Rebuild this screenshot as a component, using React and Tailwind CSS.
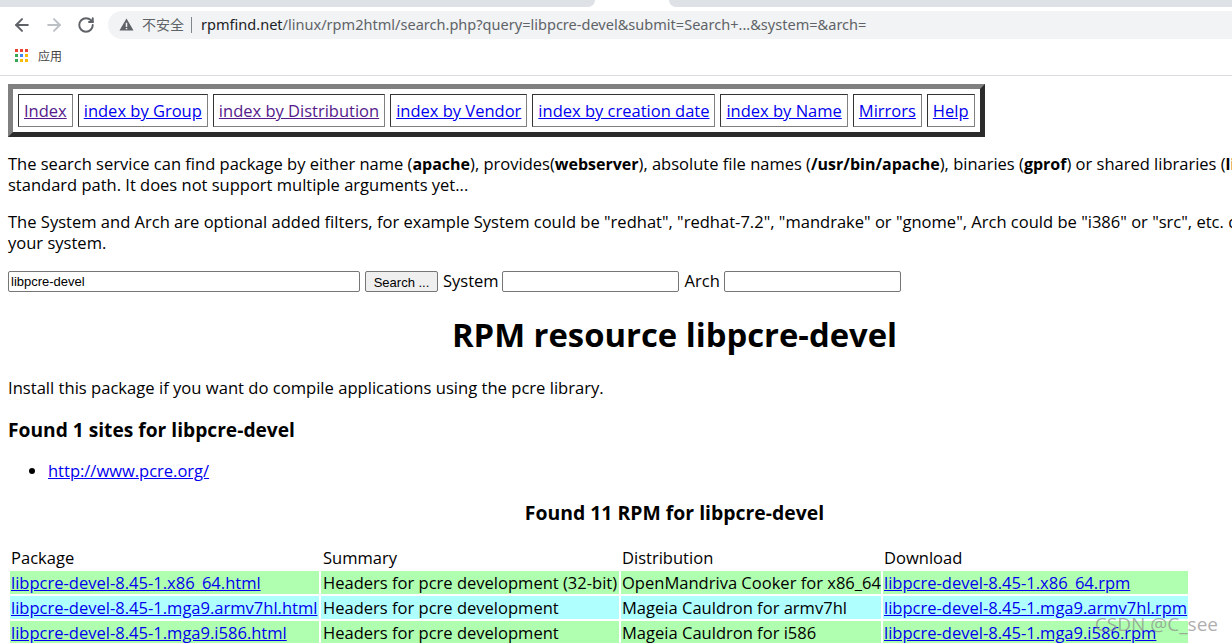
import React from "react";
import { ArrowLeft, ArrowRight, RotateCw } from "lucide-react";

const NAV = [
  { label: "Index", visited: true },
  { label: "index by Group" },
  { label: "index by Distribution", visited: true },
  { label: "index by Vendor" },
  { label: "index by creation date" },
  { label: "index by Name" },
  { label: "Mirrors" },
  { label: "Help" },
];

const ROWS = [
  {
    pkg: "libpcre-devel-8.45-1.x86_64.html",
    summary: "Headers for pcre development (32-bit)",
    dist: "OpenMandriva Cooker for x86_64",
    rpm: "libpcre-devel-8.45-1.x86_64.rpm",
    bg: "bg-[#b0ffb0]",
  },
  {
    pkg: "libpcre-devel-8.45-1.mga9.armv7hl.html",
    summary: "Headers for pcre development",
    dist: "Mageia Cauldron for armv7hl",
    rpm: "libpcre-devel-8.45-1.mga9.armv7hl.rpm",
    bg: "bg-[#b0ffff]",
  },
  {
    pkg: "libpcre-devel-8.45-1.mga9.i586.html",
    summary: "Headers for pcre development",
    dist: "Mageia Cauldron for i586",
    rpm: "libpcre-devel-8.45-1.mga9.i586.rpm",
    bg: "bg-[#b0ffb0]",
  },
];

const APPS = ["#ea4335", "#ea4335", "#ea4335", "#34a853", "#4285f4", "#fbbc05", "#34a853", "#fbbc05", "#fbbc05"];

function BrowserBar() {
  return (
    <div className="h-[76px] border-b border-[#dadce0] font-['Noto_Sans','Noto_Sans_CJK_SC',sans-serif]">
      {/* tab strip */}
      <div className="flex h-[7px]">
        <div className="w-[595px] bg-[#dee1e6] rounded-br-lg" />
        <div className="w-[74px] bg-white" />
        <div className="flex-1 bg-[#dee1e6] rounded-bl-lg" />
      </div>
      {/* toolbar */}
      <div className="flex items-center h-[28px] mt-[4px]">
        <div className="flex items-center w-[108px] pl-[12px] gap-[12px]">
          <ArrowLeft className="w-[20px] h-[20px] text-[#5f6368]" strokeWidth={2.4} />
          <ArrowRight className="w-[20px] h-[20px] text-[#bdc1c6]" strokeWidth={2.4} />
          <RotateCw className="w-[18px] h-[18px] ml-px text-[#5f6368]" strokeWidth={2.6} />
        </div>
        <div className="flex-1 h-full bg-[#f1f3f4] rounded-l-full flex items-center pl-[11px] pb-[1px] text-[14.55px] text-[#5f6368]">
          <svg viewBox="0 0 16 16" className="w-[15px] h-[15px] fill-[#5f6368]">
            <path d="M8 1.5 15.5 14.5H.5ZM7.2 6v4.6h1.6V6Zm0 5.6v1.5h1.6v-1.5Z" fillRule="evenodd" />
          </svg>
          <span className="ml-[8px] text-[14px]">不安全</span>
          <span className="w-px h-[16px] bg-[#80868b] ml-[7px] mr-[9px]" />
          <span className="text-[#202124]">rpmfind.net</span>
          <span>/linux/rpm2html/search.php?query=libpcre-devel&amp;submit=Search+...&amp;system=&amp;arch=</span>
        </div>
      </div>
      {/* bookmarks */}
      <div className="flex items-center h-[33px] pl-[15px] gap-[10px]">
        <div className="grid grid-cols-3 gap-[2px] w-[13px]">
          {APPS.map((c, i) => (
            <span key={i} className="w-[3px] h-[3px]" style={{ background: c }} />
          ))}
        </div>
        <span className="mt-[2px] text-[12px] text-[#444]">应用</span>
      </div>
    </div>
  );
}

function NavTable() {
  return (
    <div className="inline-flex gap-[5px] p-[5px] border-[5px] border-t-[#808080] border-l-[#808080] border-b-[#2b2b2b] border-r-[#2b2b2b] bg-white">
      {NAV.map((n) => (
        <div
          key={n.label}
          className="h-[33px] flex items-center px-[5px] border border-t-[#333] border-l-[#333] border-b-[#808080] border-r-[#808080]"
        >
          <a href="#" className={`underline ${n.visited ? "text-[#551a8b]" : "text-[#0000ee]"}`}>
            {n.label}
          </a>
        </div>
      ))}
    </div>
  );
}

function SearchForm() {
  return (
    <div className="flex items-center h-[21px] mt-[18px] whitespace-nowrap">
      <input
        readOnly
        value="libpcre-devel"
        className="w-[352px] h-[21px] px-[2px] border border-[#767676] rounded-[2px] text-[13px] text-black font-['Liberation_Sans',sans-serif] outline-none"
      />
      <button className="w-[73px] h-[21px] ml-[5px] border border-[#767676] rounded-[2px] bg-[#efefef] text-[13px] text-black font-['Liberation_Sans',sans-serif]">
        Search ...
      </button>
      <span className="ml-[5px] -mt-[2px]">System</span>
      <input readOnly className="w-[177px] h-[21px] ml-[3px] border border-[#767676] rounded-[2px] outline-none" />
      <span className="ml-[6px] -mt-[2px]">Arch</span>
      <input readOnly className="w-[177px] h-[21px] ml-[4px] border border-[#767676] rounded-[2px] outline-none" />
    </div>
  );
}

function ResultTable() {
  return (
    <div className="mt-[22px] ml-[2px] w-[1178px] text-[16.55px]">
      <div className="grid grid-cols-[309px_298px_260px_305px] gap-x-[2px] h-[22px] leading-[22px] px-[1px]">
        <span>Package</span>
        <span className="pl-[1px]">Summary</span>
        <span>Distribution</span>
        <span>Download</span>
      </div>
      <div className="flex flex-col gap-[2px] mt-[2px]">
        {ROWS.map((r) => (
          <div key={r.pkg} className="grid grid-cols-[309px_298px_260px_305px] gap-x-[2px] h-[23px] leading-[23px] whitespace-nowrap">
            <a href="#" className={`${r.bg} text-[#0000ee] underline px-[1px]`}>{r.pkg}</a>
            <span className={`${r.bg} pl-[2px]`}>{r.summary}</span>
            <span className={`${r.bg} px-[1px]`}>{r.dist}</span>
            <a href="#" className={`${r.bg} text-[#0000ee] underline px-[1px]`}>{r.rpm}</a>
          </div>
        ))}
      </div>
    </div>
  );
}

export default function App() {
  return (
    <div className="relative h-[643px] overflow-hidden bg-white text-black text-[16.5px] leading-[21px] font-['Open_Sans','Noto_Sans_CJK_SC',sans-serif]">
      <BrowserBar />
      <div className="px-2 pt-2 w-[1500px]">
        <NavTable />
        <p className="mt-[16px] whitespace-nowrap">
          The search service can find package by either name (<b className="text-[16px] leading-none">apache</b>), provides(<b className="text-[16px] leading-none">webserver</b>), absolute file names (<b className="text-[16px] leading-none">/usr/bin/apache</b>), binaries (<b className="text-[16px] leading-none">gprof</b>) or shared libraries (<b className="text-[16px] leading-none">libXm.so</b>) in the
          <br />
          standard path. It does not support multiple arguments yet...
        </p>
        <p className="mt-[16px] whitespace-nowrap text-[16.55px]">
          The System and Arch are optional added filters, for example System could be "redhat", "redhat-7.2", "mandrake" or "gnome", Arch could be "i386" or "src", etc. depending on
          <br />
          your system.
        </p>
        <SearchForm />
      </div>
      <div className="px-2">
        <h1 className="mt-[21px] w-[1333px] text-center text-[32.8px] leading-[43px] font-bold">RPM resource libpcre-devel</h1>
        <p className="mt-[21px] text-[16.6px]">Install this package if you want do compile applications using the pcre library.</p>
        <h3 className="mt-[19px] text-[19.2px] leading-[25px] font-bold">Found 1 sites for libpcre-devel</h3>
        <ul className="mt-[18px] pl-[40px] list-disc">
          <li>
            <a href="#" className="text-[#0000ee] underline">http://www.pcre.org/</a>
          </li>
        </ul>
        <h3 className="mt-[19px] w-[1333px] text-center text-[19.4px] leading-[25px] font-bold">Found 11 RPM for libpcre-devel</h3>
        <ResultTable />
      </div>
      {/* watermark */}
      <span className="absolute right-[14px] bottom-[9px] text-[19px] leading-[20px] text-[#8a8a8a]/70">CSDN @C_see</span>
    </div>
  );
}
